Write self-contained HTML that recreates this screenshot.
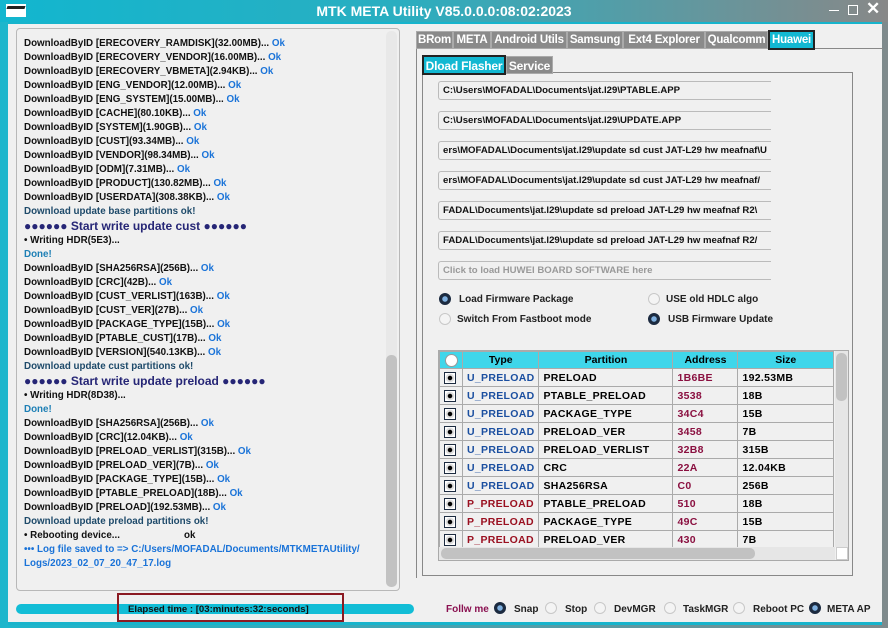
<!DOCTYPE html>
<html><head><meta charset="utf-8"><style>
*{margin:0;padding:0;box-sizing:border-box}
body{width:888px;height:628px;overflow:hidden;background:linear-gradient(90deg,#1db6cc 0%,#3aa8b8 40%,#7f8a8c 100%);font-family:"Liberation Sans",sans-serif;position:relative}
.a{position:absolute}
#title{left:0;top:0;width:888px;height:22px;background:linear-gradient(90deg,#12b6cf 0%,#2aaec0 45%,#888 100%)}
#title .t{left:0;width:888px;top:3px;text-align:center;color:#fff;font-weight:bold;font-size:14px}
#main{left:8px;top:22px;width:874px;height:601px;background:#f0f0f0;border-top:2px solid #17b4cc}
#bot{left:8px;top:622px;width:874px;height:3px;background:#17b4cc}
#log{left:16px;top:28px;width:384px;height:563px;border:1px solid #b8b8b8;border-radius:4px;background:#f0f0f0;overflow:hidden}
.ln{position:absolute;left:7px;font-size:9.8px;font-weight:bold;color:#111;white-space:nowrap}
.ok{color:#1a73d8}
.bl{color:#1a73d8}
.hd{color:#262676;font-size:12px}
.dn{color:#1d7fb5}
.tabs{font-size:11.5px;font-weight:bold;color:#fff}
.tab{position:absolute;top:31px;height:18px;background:#8a8a8a;border:1px solid #aaa;padding:2px 0 0;white-space:nowrap;text-align:center;overflow:hidden;letter-spacing:-0.2px}
.in{position:absolute;left:438px;width:333px;height:19px;border:1px solid #bbb;border-right:none;border-radius:3px 0 0 3px;background:#f0f0f0;font-size:9.6px;font-weight:bold;color:#111;padding:3px 4px;white-space:nowrap;overflow:hidden}
.rb{position:absolute;width:12px;height:12px;border-radius:50%;border:1px solid #c8c8c8;background:#f4f4f4}
.rb.on{background:radial-gradient(circle,#7fb0e0 0 2.5px,#1c2b40 3px);border-color:#1c2b40}
.lb{position:absolute;font-size:10px;font-weight:bold;color:#222;white-space:nowrap}
table{border-collapse:collapse;font-family:"Liberation Sans",sans-serif;font-size:10.5px;font-weight:bold;letter-spacing:0.3px}
td,th{border:1px solid #aaa;height:18px;padding:0 4px;white-space:nowrap;text-align:left}
th{background:#3fd6ea;text-align:center;font-family:"Liberation Sans",sans-serif;font-size:10.5px;height:17px;letter-spacing:0}
.u{color:#1b4fa0}.p{color:#9a1020}.ad{color:#8a1040}
.ck{display:inline-block;width:12px;height:12px;border:1px solid #1c2b40;background:radial-gradient(circle,#000 0 2px,#ddd 2.5px 4px,#fff 4.5px);vertical-align:middle}
</style></head><body>
<div id="title" class="a">
 <div class="a" style="left:6px;top:4px;width:20px;height:13px;background:#fff"><div style="margin:2px 1px;height:3px;background:#222;transform:skewX(-20deg)"></div></div>
 <div class="a t">MTK META Utility V85.0.0.0:08:02:2023</div>
 <div class="a" style="left:829px;top:10px;width:10px;height:1px;background:#fff"></div>
 <div class="a" style="left:848px;top:5px;width:10px;height:10px;border:1px solid #fff"></div>
 <div class="a" style="left:866px;top:-1px;color:#fff;font-size:17px;font-weight:bold">✕</div>
</div>
<div id="main" class="a"></div>
<div id="bot" class="a"></div>

<div id="log" class="a">
<div class="a" style="right:2px;top:2px;width:11px;height:556px;background:#e8e8e8;border-radius:5px"></div>
<div class="a" style="right:2px;top:326px;width:11px;height:232px;background:#c2c2c2;border-radius:5px"></div>
<div class="ln" style="top:9px">DownloadByID [ERECOVERY_RAMDISK](32.00MB)... <span class="ok">Ok</span></div>
<div class="ln" style="top:23px">DownloadByID [ERECOVERY_VENDOR](16.00MB)... <span class="ok">Ok</span></div>
<div class="ln" style="top:37px">DownloadByID [ERECOVERY_VBMETA](2.94KB)... <span class="ok">Ok</span></div>
<div class="ln" style="top:51px">DownloadByID [ENG_VENDOR](12.00MB)... <span class="ok">Ok</span></div>
<div class="ln" style="top:65px">DownloadByID [ENG_SYSTEM](15.00MB)... <span class="ok">Ok</span></div>
<div class="ln" style="top:79px">DownloadByID [CACHE](80.10KB)... <span class="ok">Ok</span></div>
<div class="ln" style="top:93px">DownloadByID [SYSTEM](1.90GB)... <span class="ok">Ok</span></div>
<div class="ln" style="top:107px">DownloadByID [CUST](93.34MB)... <span class="ok">Ok</span></div>
<div class="ln" style="top:121px">DownloadByID [VENDOR](98.34MB)... <span class="ok">Ok</span></div>
<div class="ln" style="top:135px">DownloadByID [ODM](7.31MB)... <span class="ok">Ok</span></div>
<div class="ln" style="top:149px">DownloadByID [PRODUCT](130.82MB)... <span class="ok">Ok</span></div>
<div class="ln" style="top:163px">DownloadByID [USERDATA](308.38KB)... <span class="ok">Ok</span></div>
<div class="ln" style="top:177px;color:#1e4a6a">Download update base partitions ok!</div>
<div class="ln hd" style="top:190px">●●●●●● Start write update cust ●●●●●●</div>
<div class="ln" style="top:206px">• Writing HDR(5E3)...</div>
<div class="ln dn" style="top:220px">Done!</div>
<div class="ln" style="top:234px">DownloadByID [SHA256RSA](256B)... <span class="ok">Ok</span></div>
<div class="ln" style="top:248px">DownloadByID [CRC](42B)... <span class="ok">Ok</span></div>
<div class="ln" style="top:262px">DownloadByID [CUST_VERLIST](163B)... <span class="ok">Ok</span></div>
<div class="ln" style="top:276px">DownloadByID [CUST_VER](27B)... <span class="ok">Ok</span></div>
<div class="ln" style="top:290px">DownloadByID [PACKAGE_TYPE](15B)... <span class="ok">Ok</span></div>
<div class="ln" style="top:304px">DownloadByID [PTABLE_CUST](17B)... <span class="ok">Ok</span></div>
<div class="ln" style="top:318px">DownloadByID [VERSION](540.13KB)... <span class="ok">Ok</span></div>
<div class="ln" style="top:332px;color:#1e4a6a">Download update cust partitions ok!</div>
<div class="ln hd" style="top:345px">●●●●●● Start write update preload ●●●●●●</div>
<div class="ln" style="top:361px">• Writing HDR(8D38)...</div>
<div class="ln dn" style="top:375px">Done!</div>
<div class="ln" style="top:389px">DownloadByID [SHA256RSA](256B)... <span class="ok">Ok</span></div>
<div class="ln" style="top:403px">DownloadByID [CRC](12.04KB)... <span class="ok">Ok</span></div>
<div class="ln" style="top:417px">DownloadByID [PRELOAD_VERLIST](315B)... <span class="ok">Ok</span></div>
<div class="ln" style="top:431px">DownloadByID [PRELOAD_VER](7B)... <span class="ok">Ok</span></div>
<div class="ln" style="top:445px">DownloadByID [PACKAGE_TYPE](15B)... <span class="ok">Ok</span></div>
<div class="ln" style="top:459px">DownloadByID [PTABLE_PRELOAD](18B)... <span class="ok">Ok</span></div>
<div class="ln" style="top:473px">DownloadByID [PRELOAD](192.53MB)... <span class="ok">Ok</span></div>
<div class="ln" style="top:487px;color:#1e4a6a">Download update preload partitions ok!</div>
<div class="ln" style="top:501px">• Rebooting device...<span style="position:absolute;left:160px">ok</span></div>
<div class="ln bl" style="top:515px">••• Log file saved to =&gt; C:/Users/MOFADAL/Documents/MTKMETAUtility/</div>
<div class="ln bl" style="top:529px">Logs/2023_02_07_20_47_17.log</div>
</div>

<!-- right panel -->
<div class="a" style="left:416px;top:48px;width:467px;height:530px;border:1px solid #888;border-right:none;border-bottom:none"></div>
<div class="a" style="left:422px;top:72px;width:431px;height:504px;border:1px solid #888"></div>
<div class="tabs">
<div class="tab" style="left:416px;width:37px">BRom</div>
<div class="tab" style="left:453px;width:38px">META</div>
<div class="tab" style="left:491px;width:76px">Android Utils</div>
<div class="tab" style="left:567px;width:56px">Samsung</div>
<div class="tab" style="left:623px;width:82px">Ext4 Explorer</div>
<div class="tab" style="left:705px;width:63px">Qualcomm</div>
<div class="tab" style="left:768px;width:47px;background:#12b8d2;border:2px solid #222;top:30px;height:20px">Huawei</div>
<div class="tab" style="left:422px;width:84px;top:55px;height:20px;background:#12b8d2;border:2px solid #222;font-size:12px">Dload Flasher</div>
<div class="tab" style="left:506px;width:47px;top:56px;height:18px;font-size:12px">Service</div>
</div>

<div class="in" style="top:81px">C:\Users\MOFADAL\Documents\jat.l29\PTABLE.APP</div>
<div class="in" style="top:111px">C:\Users\MOFADAL\Documents\jat.l29\UPDATE.APP</div>
<div class="in" style="top:141px">ers\MOFADAL\Documents\jat.l29\update sd cust JAT-L29 hw meafnaf\U</div>
<div class="in" style="top:171px">ers\MOFADAL\Documents\jat.l29\update sd cust JAT-L29 hw meafnaf/</div>
<div class="in" style="top:201px">FADAL\Documents\jat.l29\update sd preload JAT-L29 hw meafnaf R2\</div>
<div class="in" style="top:231px">FADAL\Documents\jat.l29\update sd preload JAT-L29 hw meafnaf R2/</div>
<div class="in" style="top:261px;color:#999">Click to load HUWEI BOARD SOFTWARE here</div>

<div class="rb on" style="left:439px;top:293px"></div><div class="lb" style="left:459px;top:294px">Load Firmware Package</div>
<div class="rb" style="left:439px;top:313px"></div><div class="lb" style="left:457px;top:314px">Switch From Fastboot mode</div>
<div class="rb" style="left:648px;top:293px"></div><div class="lb" style="left:666px;top:294px">USE old HDLC algo</div>
<div class="rb on" style="left:648px;top:313px"></div><div class="lb" style="left:668px;top:314px">USB Firmware Update</div>

<div class="a" style="left:438px;top:350px;width:411px;height:211px;border:1px solid #aaa;overflow:hidden;background:#f0f0f0">
<table style="width:395px">
<tr><th style="width:23px;padding:0"><span style="display:inline-block;width:13px;height:13px;border-radius:50%;background:#fff;border:1px solid #999;vertical-align:middle"></span></th><th style="width:76px">Type</th><th style="width:134px">Partition</th><th style="width:65px">Address</th><th>Size</th></tr>
<tr><td style="padding:0 4px"><span class="ck"></span></td><td class="u">U_PRELOAD</td><td>PRELOAD</td><td class="ad">1B6BE</td><td>192.53MB</td></tr>
<tr><td><span class="ck"></span></td><td class="u">U_PRELOAD</td><td>PTABLE_PRELOAD</td><td class="ad">3538</td><td>18B</td></tr>
<tr><td><span class="ck"></span></td><td class="u">U_PRELOAD</td><td>PACKAGE_TYPE</td><td class="ad">34C4</td><td>15B</td></tr>
<tr><td><span class="ck"></span></td><td class="u">U_PRELOAD</td><td>PRELOAD_VER</td><td class="ad">3458</td><td>7B</td></tr>
<tr><td><span class="ck"></span></td><td class="u">U_PRELOAD</td><td>PRELOAD_VERLIST</td><td class="ad">32B8</td><td>315B</td></tr>
<tr><td><span class="ck"></span></td><td class="u">U_PRELOAD</td><td>CRC</td><td class="ad">22A</td><td>12.04KB</td></tr>
<tr><td><span class="ck"></span></td><td class="u">U_PRELOAD</td><td>SHA256RSA</td><td class="ad">C0</td><td>256B</td></tr>
<tr><td><span class="ck"></span></td><td class="p">P_PRELOAD</td><td>PTABLE_PRELOAD</td><td class="ad">510</td><td>18B</td></tr>
<tr><td><span class="ck"></span></td><td class="p">P_PRELOAD</td><td>PACKAGE_TYPE</td><td class="ad">49C</td><td>15B</td></tr>
<tr><td><span class="ck"></span></td><td class="p">P_PRELOAD</td><td>PRELOAD_VER</td><td class="ad">430</td><td>7B</td></tr>
</table>
<div class="a" style="left:396px;top:0;width:14px;height:196px;background:#e6e6e6"></div>
<div class="a" style="left:397px;top:2px;width:11px;height:48px;background:#c2c2c2;border-radius:5px"></div>
<div class="a" style="left:0;top:196px;width:396px;height:14px;background:#e6e6e6"></div>
<div class="a" style="left:2px;top:197px;width:314px;height:11px;background:#c2c2c2;border-radius:5px"></div>
<div class="a" style="left:397px;top:196px;width:12px;height:13px;background:#fff;border:1px solid #ccc"></div>
</div>

<!-- bottom -->
<div class="a" style="left:16px;top:604px;width:398px;height:10px;background:#12bdd6;border-radius:5px"></div>
<div class="a" style="left:117px;top:593px;width:227px;height:29px;border:2px solid #8b1a22"></div>
<div class="a" style="left:128px;top:604px;font-size:9.6px;color:#111;font-weight:bold">Elapsed time : [03:minutes:32:seconds]</div>
<div class="lb" style="left:446px;top:604px;color:#8a1050">Follw me</div>
<div class="rb on" style="left:494px;top:602px"></div><div class="lb" style="left:514px;top:604px">Snap</div>
<div class="rb" style="left:545px;top:602px"></div><div class="lb" style="left:565px;top:604px">Stop</div>
<div class="rb" style="left:594px;top:602px"></div><div class="lb" style="left:614px;top:604px">DevMGR</div>
<div class="rb" style="left:664px;top:602px"></div><div class="lb" style="left:683px;top:604px">TaskMGR</div>
<div class="rb" style="left:733px;top:602px"></div><div class="lb" style="left:753px;top:604px">Reboot PC</div>
<div class="rb on" style="left:809px;top:602px"></div><div class="lb" style="left:827px;top:604px">META AP</div>
</body></html>
